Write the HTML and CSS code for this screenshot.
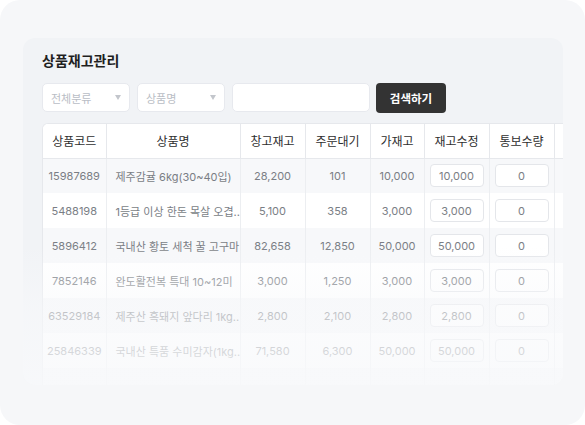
FILE: index.html
```html
<!DOCTYPE html>
<html lang="ko">
<head>
<meta charset="utf-8">
<link rel="stylesheet" href="styles.css">
</head>
<body>
<div class="frame">
  <section class="card">
    <h1 class="title">상품재고관리</h1>
    <div class="filters">
      <div class="select"><span>전체분류</span><i class="caret"></i></div>
      <div class="select"><span>상품명</span><i class="caret"></i></div>
      <div class="search-input"></div>
      <button class="btn">검색하기</button>
    </div>
    <div class="table-wrap">
      <table class="grid">
        <colgroup>
          <col class="c-code"><col class="c-name"><col class="c-num"><col class="c-num"><col class="c-sm"><col class="c-num"><col class="c-num"><col class="c-num">
        </colgroup>
        <thead>
          <tr><th>상품코드</th><th>상품명</th><th>창고재고</th><th>주문대기</th><th>가재고</th><th>재고수정</th><th>통보수량</th><th></th></tr>
        </thead>
        <tbody>
          <tr><td>15987689</td><td class="name">제주감귤 6kg(30~40입)</td><td>28,200</td><td>101</td><td>10,000</td><td><span class="cell-input">10,000</span></td><td><span class="cell-input">0</span></td><td></td></tr>
          <tr><td>5488198</td><td class="name">1등급 이상 한돈 목살 오겹..</td><td>5,100</td><td>358</td><td>3,000</td><td><span class="cell-input">3,000</span></td><td><span class="cell-input">0</span></td><td></td></tr>
          <tr><td>5896412</td><td class="name">국내산 황토 세척 꿀 고구마</td><td>82,658</td><td>12,850</td><td>50,000</td><td><span class="cell-input">50,000</span></td><td><span class="cell-input">0</span></td><td></td></tr>
          <tr><td>7852146</td><td class="name">완도활전복 특대 10~12미</td><td>3,000</td><td>1,250</td><td>3,000</td><td><span class="cell-input">3,000</span></td><td><span class="cell-input">0</span></td><td></td></tr>
          <tr><td>63529184</td><td class="name">제주산 흑돼지 앞다리 1kg..</td><td>2,800</td><td>2,100</td><td>2,800</td><td><span class="cell-input">2,800</span></td><td><span class="cell-input">0</span></td><td></td></tr>
          <tr><td>25846339</td><td class="name">국내산 특품 수미감자(1kg..</td><td>71,580</td><td>6,300</td><td>50,000</td><td><span class="cell-input">50,000</span></td><td><span class="cell-input">0</span></td><td></td></tr>
          <tr><td></td><td class="name"></td><td></td><td></td><td></td><td></td><td></td><td></td></tr>
        </tbody>
      </table>
    </div>
  </section>
</div>
</body>
</html>
```
FILE: styles.css
```css
* { box-sizing: border-box; }
html, body { margin: 0; padding: 0; background: #ffffff; }
body {
  font-family: "Inter", "Noto Sans CJK KR", "Noto Sans", sans-serif;
  color: #333;
}
.frame {
  width: 585px;
  height: 425px;
  border-radius: 20px;
  background: #f6f7f9;
  padding: 38px 0 0 23px;
  overflow: hidden;
}
.card {
  position: relative;
  width: 540px;
  height: 347px;
  border-radius: 12px;
  background: #f1f3f6;
  padding: 12px 0 0 19px;
  overflow: hidden;
}
.card::after {
  content: "";
  position: absolute;
  left: 0; right: 0; bottom: 0;
  height: 140px;
  background: linear-gradient(to bottom, rgba(248,249,251,0) 0%, rgba(248,249,251,0.55) 45%, rgba(248,249,251,0.85) 100%);
  pointer-events: none;
}
.title {
  margin: 0;
  font-size: 14px;
  line-height: 21px;
  font-weight: 700;
  color: #1f1f1f;
}
.filters {
  display: flex;
  gap: 7px;
  margin-top: 12px;
  height: 29px;
}
.select, .search-input {
  height: 29px;
  background: #fff;
  border: 1px solid #e7e9ee;
  border-radius: 5px;
}
.select {
  width: 88px;
  display: flex;
  align-items: center;
  justify-content: space-between;
  padding: 0 8px 0 8px;
  font-size: 11px;
  color: #b9bdc5;
}
.caret {
  width: 0; height: 0;
  border-left: 3.5px solid transparent;
  border-right: 3.5px solid transparent;
  border-top: 5px solid #c3c6cc;
}
.search-input { width: 138px; }
.btn {
  margin-left: -1px;
  width: 70px;
  height: 30px;
  border: 0;
  border-radius: 4px;
  background: #333333;
  color: #fff;
  font-family: inherit;
  font-size: 11.5px;
  font-weight: 700;
  padding: 0;
}
.table-wrap {
  margin-top: 11px;
  width: 600px;
  border-radius: 6px 0 0 0;
  overflow: hidden;
  background: #fff;
  border-top: 1px solid #e6e8ec;
  border-left: 1px solid #e6e8ec;
}
.grid {
  border-collapse: collapse;
  table-layout: fixed;
  width: 576px;
}
.c-code { width: 63px; }
.c-name { width: 134px; }
.c-num { width: 65px; }
.c-sm { width: 54px; }
.grid th {
  height: 34px;
  font-size: 12px;
  font-weight: 400;
  color: #2e2e2e;
  border-right: 1px solid #e6e8ec;
  border-bottom: 1px solid #e6e8ec;
  background: #fff;
  padding: 0;
}
.grid td {
  height: 35px;
  padding: 0;
  text-align: center;
  font-size: 11px;
  font-weight: 400;
  color: #7a7e85;
  border-right: 1px solid #eceef1;
  white-space: nowrap;
  overflow: hidden;
}
.grid td.name { text-align: left; padding-left: 9px; }
.grid tbody tr:nth-child(odd) td { background: #f7f8fa; }
.grid tbody tr:nth-child(even) td { background: #ffffff; }
.cell-input {
  display: inline-flex;
  align-items: center;
  justify-content: center;
  width: 54px;
  height: 23px;
  border: 1px solid #e4e6ea;
  border-radius: 4px;
  background: #fff;
  vertical-align: middle;
}
```
